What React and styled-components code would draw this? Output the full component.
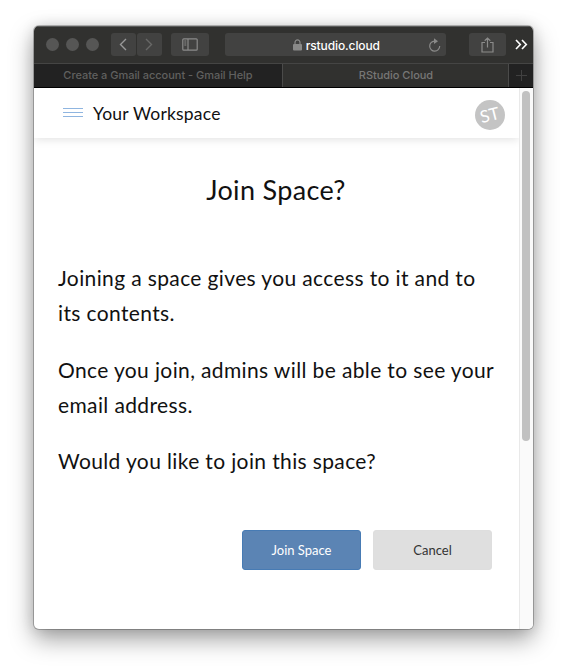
import React from "react";
import styled, { createGlobalStyle } from "styled-components";

const Global = createGlobalStyle`
  * { box-sizing: border-box; }
  body { margin: 0; background: #fff; overflow: hidden; }
`;

const Desktop = styled.div`
  height: 671px;
  padding: 26px 34px 0;
`;

const Window = styled.main`
  width: 499px;
  height: 603px;
  display: flex;
  flex-direction: column;
  overflow: hidden;
  border-radius: 5px;
  background: #fff;
  box-shadow: 0 0 0 1px rgba(0, 0, 0, 0.24), 0 10px 24px rgba(0, 0, 0, 0.38),
    0 0 14px rgba(0, 0, 0, 0.12);
`;

const Toolbar = styled.header`
  height: 37px;
  flex: none;
  display: flex;
  align-items: center;
  padding: 0 5px 0 12px;
  background: #31312f;
  box-shadow: inset 0 1px #595a59;
`;

const Lights = styled.div`
  display: flex;
  gap: 7px;
  margin-right: 12px;
`;

const Light = styled.i`
  width: 13px;
  height: 13px;
  border-radius: 50%;
  background: #565655;
`;

const ToolButton = styled.button`
  width: ${(p) => p.$width}px;
  height: 23px;
  margin: 0 ${(p) => p.$gap}px 0 0;
  padding: 0;
  display: grid;
  place-items: center;
  border: 0;
  border-radius: 3px;
  background: #424241;
  color: ${(p) => p.$color || "#999"};
`;

const AddressBar = styled.div`
  width: 222px;
  height: 23px;
  margin-right: 23px;
  padding: 0 5px 0 68px;
  display: flex;
  align-items: center;
  border-radius: 3px;
  background: #424241;
  color: #fff;
  font: 500 12px/23px Inter, sans-serif;
  letter-spacing: -0.1px;
`;

const Host = styled.span`
  flex: 1;
  padding: 1px 0 0 4px;
`;

const Tabs = styled.nav`
  height: 25px;
  flex: none;
  display: flex;
  border-top: 1px solid #454544;
  border-bottom: 1px solid #000;
  background: #222;
`;

const Tab = styled.div`
  width: ${(p) => p.$width}px;
  padding-left: ${(p) => (p.$active ? 1 : 0)}px;
  display: flex;
  align-items: center;
  justify-content: center;
  border-right: 1px solid #4b4b4a;
  background: ${(p) => (p.$active ? "#31312f" : "#222")};
  color: ${(p) => (p.$active ? "#777776" : "#60605f")};
  font: 500 11px/23px Inter, sans-serif;
  letter-spacing: -0.03px;
  white-space: nowrap;
`;

const NewTab = styled.div`
  flex: 1;
  display: grid;
  place-items: center;
  color: #414141;
`;

const Viewport = styled.div`
  flex: 1;
  display: flex;
`;

const Page = styled.section`
  width: 485px;
  color: #111;
  font-family: Lato, sans-serif;
`;

const AppHeader = styled.header`
  height: 50px;
  display: flex;
  align-items: center;
  padding: 1px 14px 0 29px;
  box-shadow: 0 1px 9px rgba(0, 0, 0, 0.13);
`;

const Workspace = styled.span`
  flex: 1;
  padding-left: 10px;
  font-size: 17.5px;
  line-height: 24px;
  letter-spacing: 0.2px;
`;

const Avatar = styled.div`
  width: 30px;
  height: 30px;
  margin-top: 3px;
  display: grid;
  place-items: center;
  border-radius: 50%;
  background: #c4c4c4;
  color: #fff;
  font-size: 17px;
  line-height: 20px;
`;

const Initials = styled.span`
  transform: rotate(-14deg);
`;

const Dialog = styled.div`
  padding: 35px 24px 0;
`;

const Title = styled.h1`
  height: 34px;
  margin: 0 1px 53px 0;
  text-align: center;
  font-size: 27px;
  font-weight: 400;
  line-height: 34px;
  letter-spacing: 0.33px;
`;

const Copy = styled.p`
  margin: 0 0 21.7px;
  font-size: 21px;
  line-height: 35px;
  letter-spacing: 0.37px;
  white-space: nowrap;
`;

const Actions = styled.div`
  display: flex;
  justify-content: flex-end;
  gap: 12px;
  padding: 29.9px 3px 0 0;
`;

const ActionButton = styled.button`
  width: 119px;
  height: 40px;
  padding: 1px 0 0;
  border: 1px solid ${(p) => (p.$primary ? "#477bb4" : "#dedede")};
  border-radius: 3px;
  background: ${(p) => (p.$primary ? "#5b84b4" : "#dfdfdf")};
  color: ${(p) => (p.$primary ? "#fff" : "#333")};
  font: 400 13px/20px Lato, sans-serif;
`;

const ScrollTrack = styled.div`
  width: 14px;
  padding: 3px 3px 0 2px;
  border-left: 1px solid #e9e9e9;
  background: #fafafa;
`;

const ScrollThumb = styled.div`
  width: 8px;
  height: 350px;
  border-radius: 4px;
  background: #c1c1c1;
`;

const Line = styled.svg`
  display: block;
  flex: none;
  fill: none;
  stroke: currentColor;
  stroke-width: ${(p) => p.$weight || 1};
`;

const MenuLines = styled(Line)`
  margin-top: -2px;
  color: #8fb5e0;
`;

const ChevronIcon = ({ forward }) => (
  <Line width="8" height="13" viewBox="0 0 8 13" $weight={1.4}>
    <path d={forward ? "M1 1l5.5 5.5L1 12" : "M7 1L1.5 6.5 7 12"} />
  </Line>
);

const SidebarIcon = () => (
  <Line width="16" height="13" viewBox="0 0 16 13" $weight={1.2}>
    <rect x=".8" y=".8" width="14.4" height="11.4" rx="1" />
    <path d="M6 1v11M2.3 3h2M2.3 5h2M2.3 7h2" />
  </Line>
);

const LockIcon = () => (
  <svg width="9" height="12" viewBox="0 0 9 12">
    <path d="M2 5V3.4a2.5 2.5 0 0 1 5 0V5" fill="none" stroke="#8a8a89" strokeWidth="1.2" />
    <rect y="5" width="9" height="6.5" rx="1" fill="#8a8a89" />
  </svg>
);

const ReloadIcon = () => (
  <svg width="13" height="14" viewBox="0 0 13 14">
    <path d="M7.5 3.1H6.5a5 5 0 1 0 5.2 5" fill="none" stroke="#8a8a89" strokeWidth="1.2" />
    <path d="M6 .3l4 2.9-4 2.9z" fill="#8a8a89" />
  </svg>
);

const ShareIcon = () => (
  <Line width="13" height="16" viewBox="0 0 13 16" $weight={1.2}>
    <path d="M4 5.5H1V15h11V5.5H9M6.5 10.5V1.2M3.7 3.8l2.8-2.7 2.8 2.7" />
  </Line>
);

const MoreIcon = () => (
  <Line width="13" height="11" viewBox="0 0 13 11" $weight={1.6} color="#fff">
    <path d="M1 1l4.3 4.5L1 10M7 1l4.3 4.5L7 10" />
  </Line>
);

const MenuIcon = () => (
  <MenuLines width="20" height="9" viewBox="0 0 20 9">
    <path d="M0 .5h20M0 4.5h20M0 8.5h20" />
  </MenuLines>
);

export default function App() {
  return (
    <Desktop>
      <Global />
      <Window>
        <Toolbar>
          <Lights><Light /><Light /><Light /></Lights>
          <ToolButton $width={25} $gap={1} aria-label="Back"><ChevronIcon /></ToolButton>
          <ToolButton $width={25} $gap={9} $color="#686867" aria-label="Forward"><ChevronIcon forward /></ToolButton>
          <ToolButton $width={38} $gap={16} $color="#8b8b8a" aria-label="Sidebar"><SidebarIcon /></ToolButton>
          <AddressBar>
            <LockIcon />
            <Host>rstudio.cloud</Host>
            <ReloadIcon />
          </AddressBar>
          <ToolButton $width={37} $gap={9} $color="#8b8b8a" aria-label="Share"><ShareIcon /></ToolButton>
          <MoreIcon />
        </Toolbar>
        <Tabs>
          <Tab $width={249}>Create a Gmail account - Gmail Help</Tab>
          <Tab $width={226} $active>RStudio Cloud</Tab>
          <NewTab>
            <Line width="11" height="11" viewBox="0 0 11 11"><path d="M5.5 0v11M0 5.5h11" /></Line>
          </NewTab>
        </Tabs>
        <Viewport>
          <Page>
            <AppHeader>
              <MenuIcon />
              <Workspace>Your Workspace</Workspace>
              <Avatar><Initials>ST</Initials></Avatar>
            </AppHeader>
            <Dialog>
              <Title>Join Space?</Title>
              <Copy>Joining a space gives you access to it and to<br />its contents.</Copy>
              <Copy>Once you join, admins will be able to see your<br />email address.</Copy>
              <Copy>Would you like to join this space?</Copy>
              <Actions>
                <ActionButton $primary>Join Space</ActionButton>
                <ActionButton>Cancel</ActionButton>
              </Actions>
            </Dialog>
          </Page>
          <ScrollTrack><ScrollThumb /></ScrollTrack>
        </Viewport>
      </Window>
    </Desktop>
  );
}
